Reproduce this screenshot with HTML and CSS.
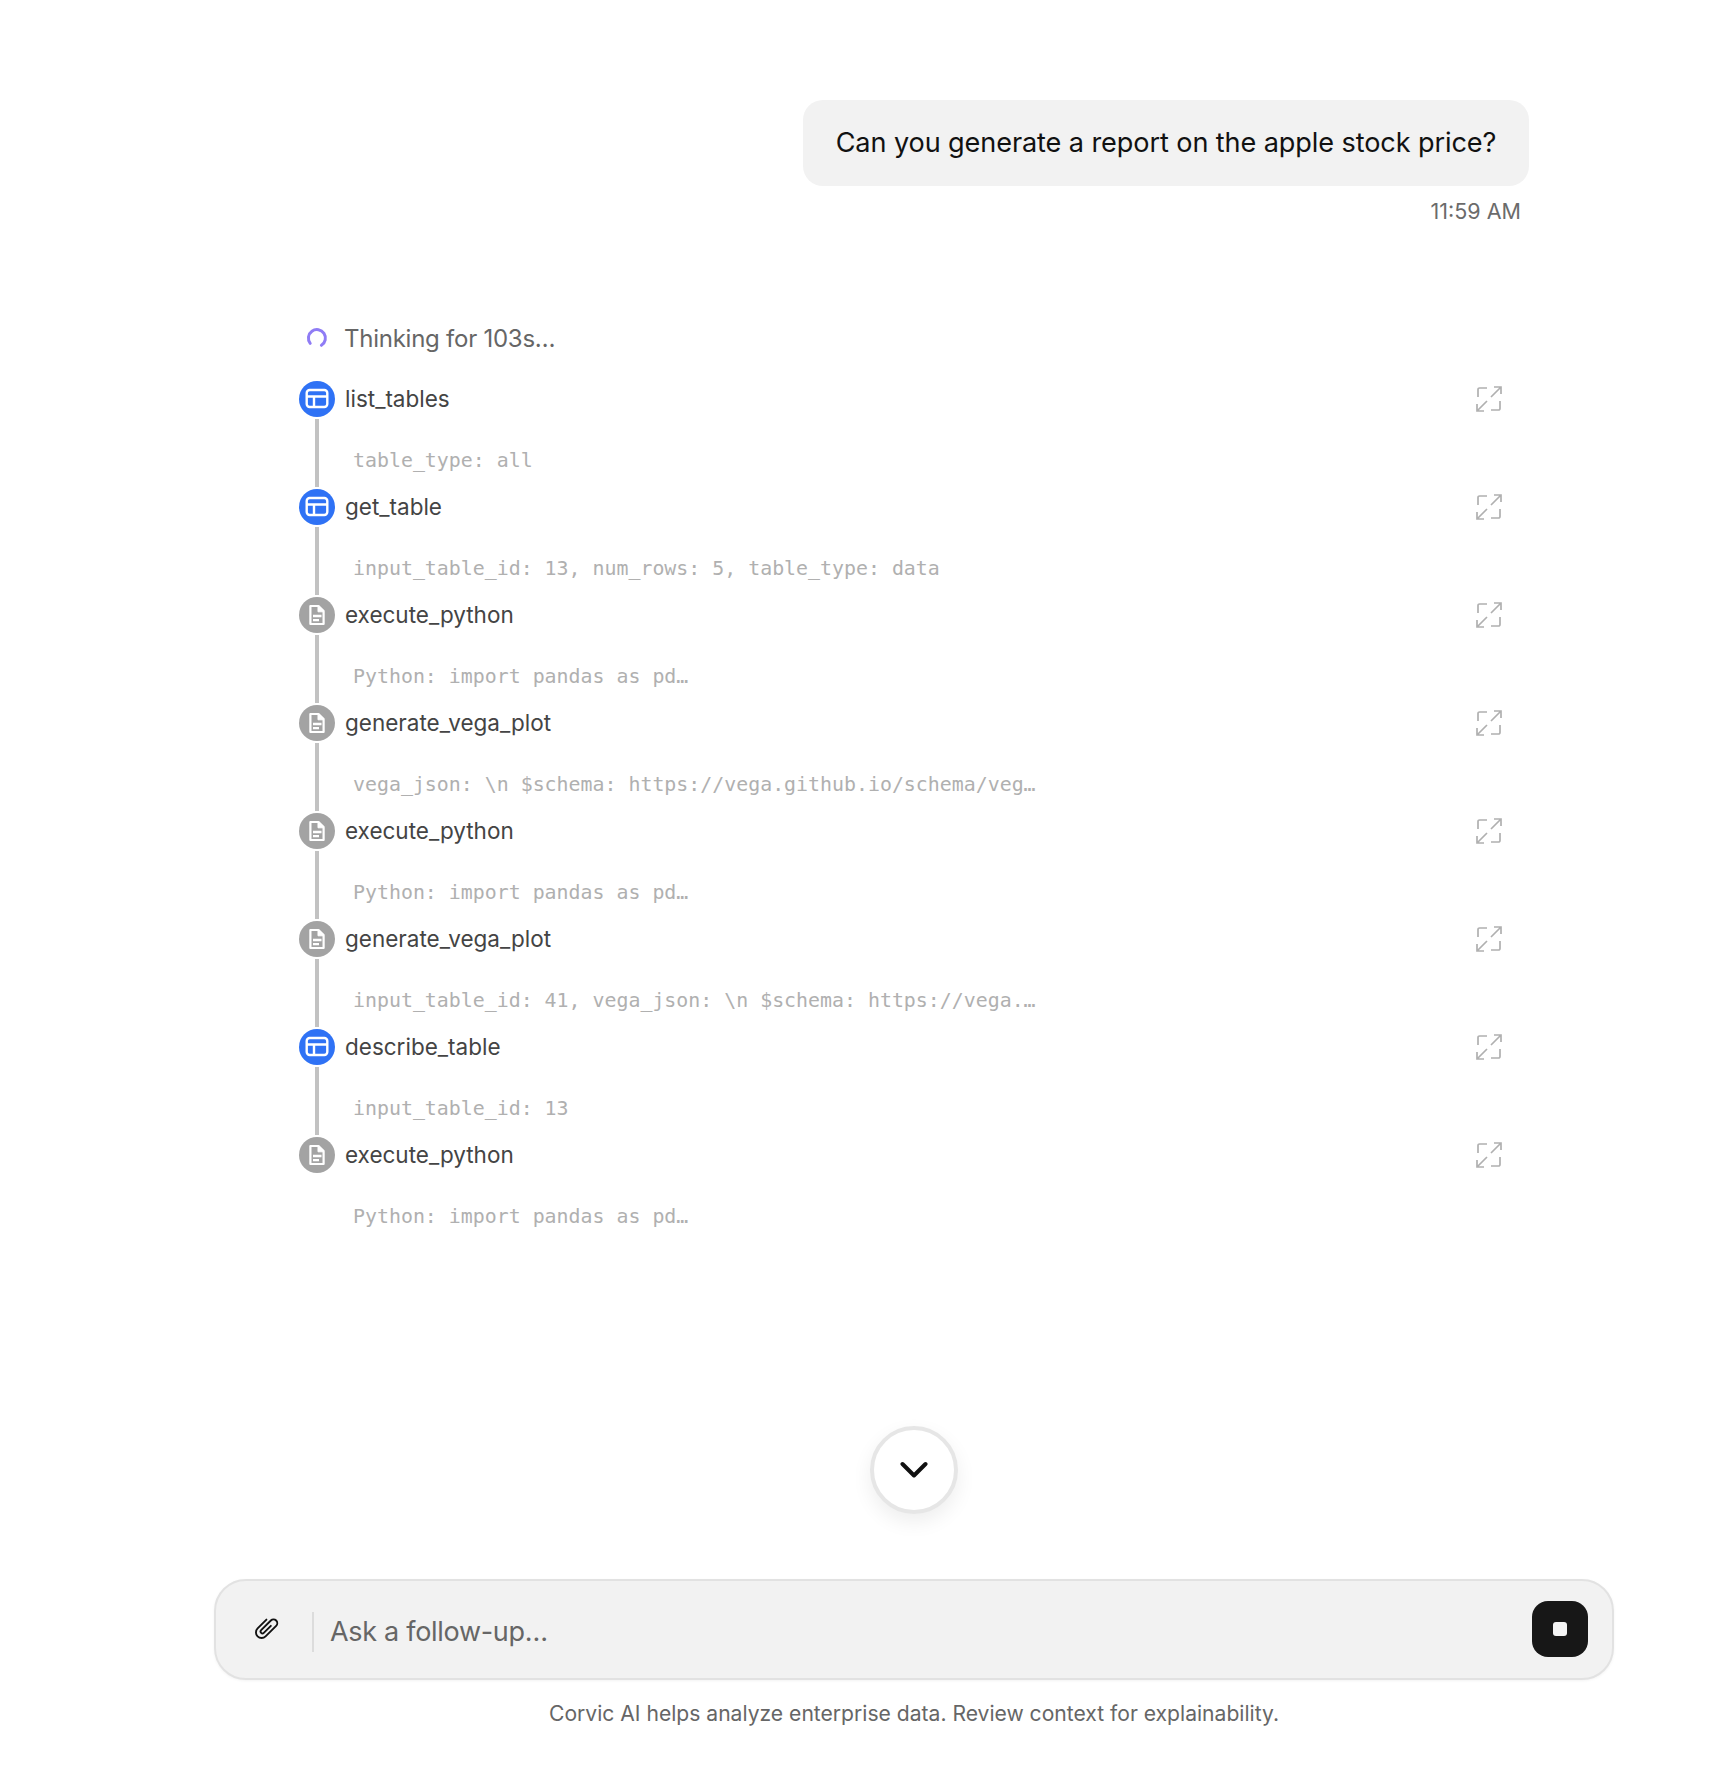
FILE: index.html
```html
<!DOCTYPE html>
<html lang="en">
<head>
<meta charset="utf-8">
<title>Corvic AI</title>
<link rel="stylesheet" href="styles.css">
</head>
<body>
<svg class="defs" width="0" height="0" aria-hidden="true">
  <symbol id="i-table" viewBox="0 0 24 24"><rect x="1.700" y="3" width="20.600" height="17" rx="3" fill="none" stroke="#fff" stroke-width="2.400"/><path d="M2 9.500h20M9 9.500v10" fill="none" stroke="#fff" stroke-width="2.400"/></symbol>
  <symbol id="i-doc" viewBox="0 0 24 24"><path d="M5.400 3h8.100l5.100 5.100V21H5.400z" fill="none" stroke="#fff" stroke-width="2.200" stroke-linejoin="round"/><path d="M13 3v5.800h5.800z" fill="#fff" stroke="#fff" stroke-width="1" stroke-linejoin="round"/><path d="M8 13h8.500M8 17.200h6" fill="none" stroke="#fff" stroke-width="2.300"/></symbol>
  <symbol id="i-expand" viewBox="0 0 28 28"><path d="M12 3H4.500A1.500 1.500 0 0 0 3 4.500V12M16 25h7.500a1.500 1.500 0 0 0 1.500-1.500V16M16 12 26 2M19 2h7v7M12 16 2 26M2 19v7h7" fill="none" stroke="#b0b0b0" stroke-width="1.700"/></symbol>
</svg>
<main class="page">
  <section class="thread">
    <div class="user-msg">
      <div class="bubble">Can you generate a report on the apple stock price?</div>
      <div class="time">11:59 AM</div>
    </div>
    <div class="thinking">
      <svg class="spinner" viewBox="0 0 22 22"><path d="M4.200 16.300A8.500 8.500 0 1 1 15.400 18.300" fill="none" stroke="#8f7cf5" stroke-width="3" stroke-linecap="round"/></svg>
      <span>Thinking for 103s…</span>
    </div>
    <ol class="steps">
      <li class="step">
        <div class="rail"><span class="badge badge-blue"><svg class="glyph"><use href="#i-table"/></svg></span><span class="line"></span></div>
        <div class="body"><div class="name">list_tables</div><code class="args">table_type: all</code></div>
        <svg class="expand"><use href="#i-expand"/></svg>
      </li>
      <li class="step">
        <div class="rail"><span class="badge badge-blue"><svg class="glyph"><use href="#i-table"/></svg></span><span class="line"></span></div>
        <div class="body"><div class="name">get_table</div><code class="args">input_table_id: 13, num_rows: 5, table_type: data</code></div>
        <svg class="expand"><use href="#i-expand"/></svg>
      </li>
      <li class="step">
        <div class="rail"><span class="badge badge-gray"><svg class="glyph"><use href="#i-doc"/></svg></span><span class="line"></span></div>
        <div class="body"><div class="name">execute_python</div><code class="args">Python: import pandas as pd…</code></div>
        <svg class="expand"><use href="#i-expand"/></svg>
      </li>
      <li class="step">
        <div class="rail"><span class="badge badge-gray"><svg class="glyph"><use href="#i-doc"/></svg></span><span class="line"></span></div>
        <div class="body"><div class="name">generate_vega_plot</div><code class="args">vega_json: \n $schema: https://vega.github.io/schema/veg…</code></div>
        <svg class="expand"><use href="#i-expand"/></svg>
      </li>
      <li class="step">
        <div class="rail"><span class="badge badge-gray"><svg class="glyph"><use href="#i-doc"/></svg></span><span class="line"></span></div>
        <div class="body"><div class="name">execute_python</div><code class="args">Python: import pandas as pd…</code></div>
        <svg class="expand"><use href="#i-expand"/></svg>
      </li>
      <li class="step">
        <div class="rail"><span class="badge badge-gray"><svg class="glyph"><use href="#i-doc"/></svg></span><span class="line"></span></div>
        <div class="body"><div class="name">generate_vega_plot</div><code class="args">input_table_id: 41, vega_json: \n $schema: https://vega.…</code></div>
        <svg class="expand"><use href="#i-expand"/></svg>
      </li>
      <li class="step">
        <div class="rail"><span class="badge badge-blue"><svg class="glyph"><use href="#i-table"/></svg></span><span class="line"></span></div>
        <div class="body"><div class="name">describe_table</div><code class="args">input_table_id: 13</code></div>
        <svg class="expand"><use href="#i-expand"/></svg>
      </li>
      <li class="step">
        <div class="rail"><span class="badge badge-gray"><svg class="glyph"><use href="#i-doc"/></svg></span></div>
        <div class="body"><div class="name">execute_python</div><code class="args">Python: import pandas as pd…</code></div>
        <svg class="expand"><use href="#i-expand"/></svg>
      </li>
    </ol>
  </section>
  <button class="scroll-down" type="button" aria-label="Scroll to bottom">
    <svg viewBox="0 0 28 18" width="28" height="18"><path d="M2.500 3l11.500 11.500L25.500 3" fill="none" stroke="#111" stroke-width="4" stroke-linecap="round" stroke-linejoin="round"/></svg>
  </button>
  <form class="composer">
    <button class="attach" type="button" aria-label="Attach">
      <svg viewBox="0 0 24 24" width="30" height="30"><path transform="rotate(45 12 12)" d="M7.500 7V17a4.500 4.500 0 0 0 9 0V5a3 3 0 0 0-6 0V16a1.500 1.500 0 0 0 3 0V8" fill="none" stroke="#111" stroke-width="1.500" stroke-linecap="round" stroke-linejoin="round"/></svg>
    </button>
    <span class="divider"></span>
    <span class="placeholder">Ask a follow-up…</span>
    <button class="stop" type="button" aria-label="Stop"><span class="stop-mark"></span></button>
  </form>
  <p class="disclaimer">Corvic AI helps analyze enterprise data. Review context for explainability.</p>
</main>
</body>
</html>
```
FILE: styles.css
```css
* { box-sizing: border-box; }
html, body { margin: 0; padding: 0; background: #fff; }
body { font-family: Inter, "Noto Sans", sans-serif; color: #111; }
.defs { position: absolute; }
.page {
  width: 1730px;
  height: 1770px;
  padding: 100px 0 0 98px;
  display: flex;
  flex-direction: column;
  align-items: center;
}
.thread { width: 1232px; }
.user-msg { display: flex; flex-direction: column; align-items: flex-end; margin-right: 1px; }
.bubble {
  background: #f2f2f2;
  border-radius: 20px;
  height: 86px;
  width: 726px;
  padding-bottom: 2px;
  display: flex;
  align-items: center;
  justify-content: center;
  font-size: 27.100px;
  letter-spacing: -0.1px;
  color: #111;
}
.time { margin: 12px 8px 0 0; font-size: 21.500px; line-height: 26px; color: #6b6b6b; }
.thinking {
  margin-top: 99px;
  display: flex;
  align-items: center;
  gap: 16px;
  height: 30px;
  padding-left: 8px;
  font-size: 24px;
  letter-spacing: -0.25px;
  color: #666;
}
.spinner { width: 22px; height: 22px; flex: none; }
.steps { list-style: none; margin: 28px 0 0 1px; padding: 0; }
.step { height: 108px; display: flex; align-items: flex-start; padding-right: 27px; }
.rail { width: 36px; height: 108px; flex: none; display: flex; flex-direction: column; align-items: center; }
.badge { width: 36px; height: 36px; flex: none; border-radius: 50%; display: flex; align-items: center; justify-content: center; }
.badge-blue { background: #2f72f5; }
.badge-gray { background: #a3a3a3; }
.glyph { width: 24px; height: 24px; }
.line { width: 4px; flex: 1; margin: 2px 0; background: #c2c2c2; }
.body { flex: 1; padding-left: 10px; }
.name { height: 36px; line-height: 36px; font-size: 22.500px; color: #444; }
.args { display: block; margin: 32px 0 0 8px; line-height: 24px; font-family: "DejaVu Sans Mono", monospace; font-size: 19.900px; color: #b0b0b0; white-space: pre; }
.expand { width: 28px; height: 28px; flex: none; margin-top: 4px; }
.scroll-down {
  margin-top: 181px;
  width: 88px;
  height: 88px;
  flex: none;
  border-radius: 50%;
  background: #fff;
  border: 4px solid #e6e6e6;
  box-shadow: 0 8px 20px rgba(0,0,0,.07);
  display: flex;
  align-items: center;
  justify-content: center;
  padding: 0;
}
.composer {
  margin-top: 65px;
  width: 1400px;
  height: 101px;
  flex: none;
  border: 2px solid #e2e2e2;
  border-radius: 32px;
  background: #f2f2f2;
  box-shadow: 0 1px 3px rgba(0,0,0,.05);
  display: flex;
  align-items: center;
  padding: 0 24px 0 35px;
}
.attach { background: none; border: 0; padding: 0; width: 30px; height: 30px; flex: none; margin-top: -3px; }
.divider { width: 2px; height: 40px; background: #dcdcdc; margin: 4px 16px 0 31px; flex: none; }
.placeholder { flex: 1; font-size: 27px; letter-spacing: -0.3px; color: #666; margin-top: 3px; }
.stop { width: 56px; height: 56px; flex: none; border: 0; padding: 0; border-radius: 16px; background: #171717; display: flex; align-items: center; justify-content: center; margin-top: -1px; }
.stop-mark { width: 14px; height: 14px; border-radius: 3px; background: #f4f4f4; }
.disclaimer { margin: 21px 0 0; font-size: 21.100px; line-height: 26px; color: #666; }
```
